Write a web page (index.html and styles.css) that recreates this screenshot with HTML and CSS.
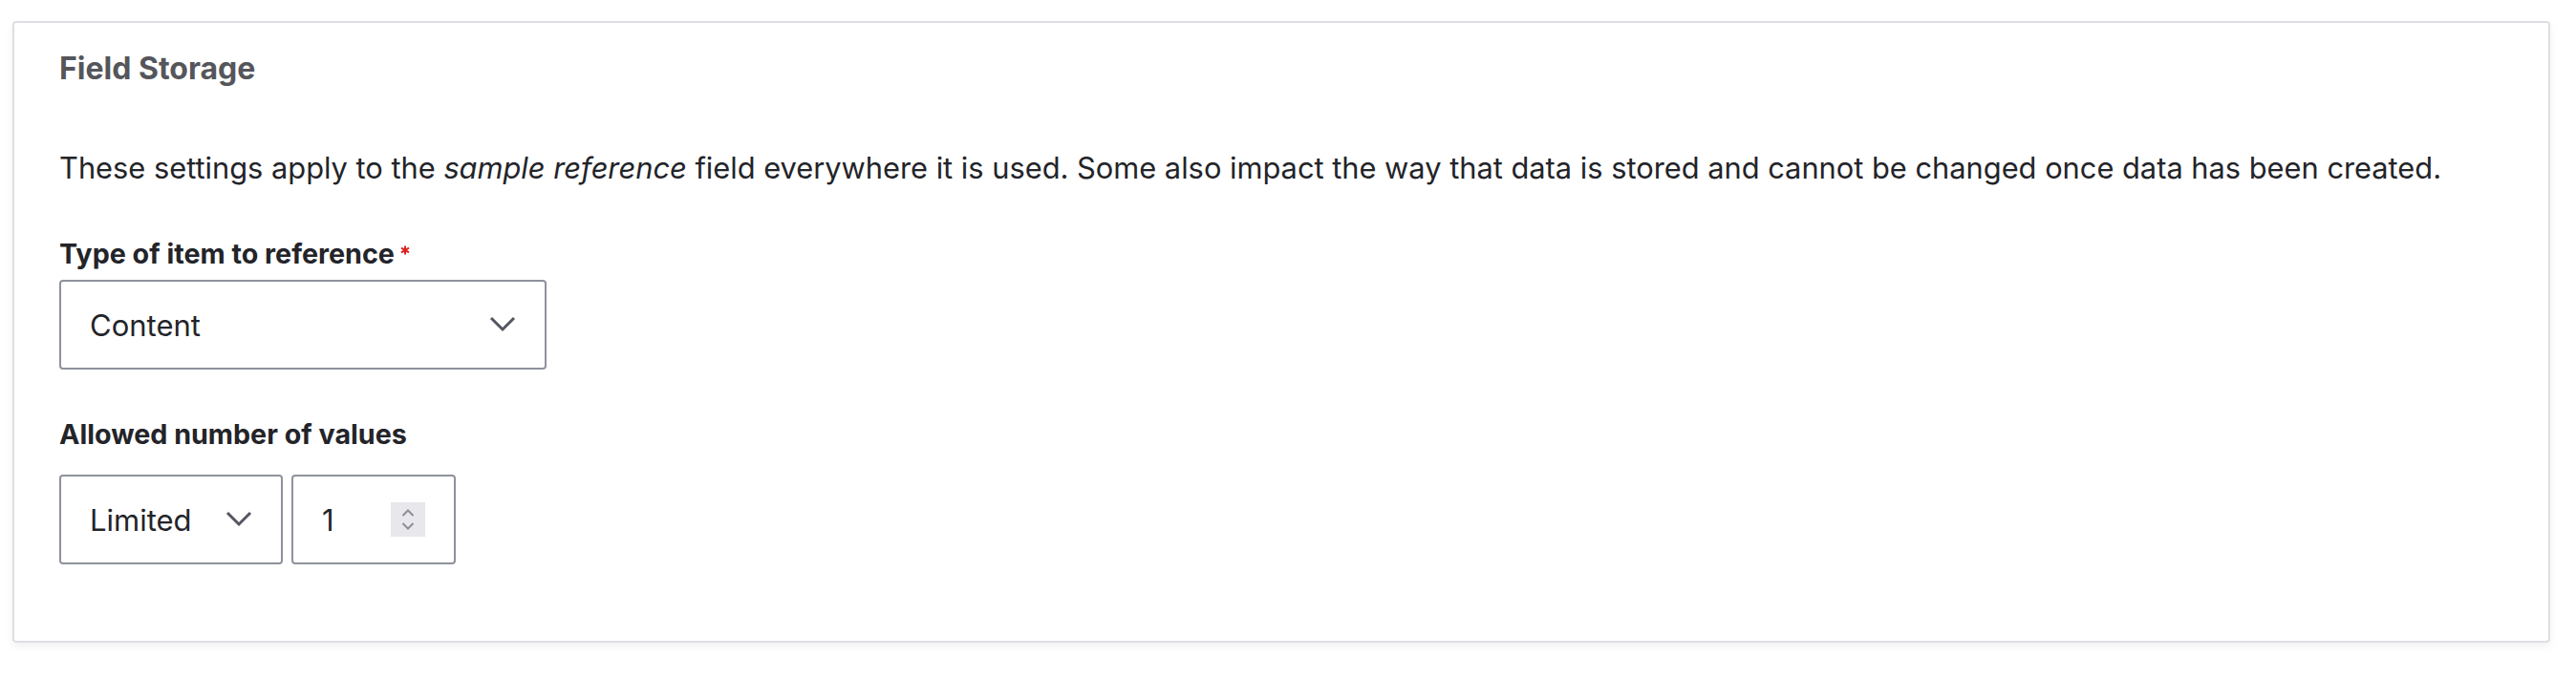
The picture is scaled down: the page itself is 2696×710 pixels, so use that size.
FILE: index.html
```html
<!DOCTYPE html>
<html lang="en">
<head>
<meta charset="utf-8">
<title>Field Storage</title>
<link rel="stylesheet" href="styles.css">
</head>
<body>
<main class="page">
  <fieldset class="card">
    <legend class="card__title">Field Storage</legend>
    <p class="card__desc">These settings apply to the <em>sample reference</em> field everywhere it is used. Some also impact the way that data is stored and cannot be changed once data has been created.</p>

    <div class="form-item form-item--first">
      <div class="form-label">Type of item to reference<svg class="req" width="10" height="10" viewBox="0 0 10 10" aria-hidden="true"><g stroke="#dc2323" stroke-width="2" stroke-linecap="butt"><line x1="5" y1="0.4" x2="5" y2="9.6"/><line x1="1" y1="2.7" x2="9" y2="7.3"/><line x1="1" y1="7.3" x2="9" y2="2.7"/></g></svg></div>
      <div class="select select--wide" role="combobox">
        <span class="select__value">Content</span>
        <svg class="chev" width="28" height="18" viewBox="0 0 14 9" aria-hidden="true"><path d="M1 1L7 7L13 1" fill="none" stroke="#545560" stroke-width="1.5"/></svg>
      </div>
    </div>

    <div class="form-item form-item--second">
      <div class="form-label form-label--gap">Allowed number of values</div>
      <div class="inline-row">
        <div class="select select--small" role="combobox">
          <span class="select__value">Limited</span>
          <svg class="chev" width="28" height="18" viewBox="0 0 14 9" aria-hidden="true"><path d="M1 1L7 7L13 1" fill="none" stroke="#545560" stroke-width="1.5"/></svg>
        </div>
        <div class="number" role="spinbutton">
          <span class="select__value">1</span>
          <span class="spin">
            <svg width="14" height="8" viewBox="0 0 14 8" aria-hidden="true"><path d="M1.5 7L7 1.5L12.5 7" fill="none" stroke="#8e8e98" stroke-width="2"/></svg>
            <svg width="14" height="8" viewBox="0 0 14 8" aria-hidden="true"><path d="M1.5 1L7 6.5L12.5 1" fill="none" stroke="#8e8e98" stroke-width="2"/></svg>
          </span>
        </div>
      </div>
    </div>
  </fieldset>
</main>
</body>
</html>
```

FILE: styles.css
```css
* { box-sizing: border-box; }

html, body {
  margin: 0;
  padding: 0;
  background: #ffffff;
}

body {
  font-family: Inter, "Liberation Sans", sans-serif;
  color: #232429;
}

.page {
  padding: 22px 27px 30px 13px;
}

.card {
  margin: 0;
  min-width: 0;
  border: 2px solid #dedfe4;
  border-radius: 4px;
  box-shadow: 0 4px 10px rgba(0, 0, 0, 0.06);
  padding: 24px 47px 80px 47px;
  background: #ffffff;
  display: block;
}

.card__title {
  float: left;
  width: 100%;
  padding: 0;
  margin: 0;
  font-size: 32px;
  line-height: 48px;
  font-weight: 700;
  color: #55565b;
}

.card__desc {
  clear: both;
  margin: 0;
  padding-top: 56px;
  font-size: 30.8px;
  line-height: 48px;
  color: #232429;
}

.form-item--first { margin-top: 48px; }
.form-item--second { margin-top: 50px; }

.form-label {
  font-size: 28.7px;
  line-height: 36px;
  font-weight: 700;
  color: #232429;
  margin-bottom: 9px;
}

.form-label--gap { margin-bottom: 24px; }

.req {
  display: inline-block;
  vertical-align: top;
  margin-top: 9px;
  margin-left: 6px;
}

.select,
.number {
  height: 94px;
  border: 2px solid #8e929c;
  border-radius: 4px;
  background: #ffffff;
  display: flex;
  align-items: center;
  justify-content: space-between;
  padding: 0 30px;
  font-size: 31px;
  color: #232429;
}

.select--wide { width: 510px; }
.select--small { width: 234px; }

.inline-row {
  display: flex;
  gap: 9px;
}

.number { width: 172px; }

.spin {
  width: 36px;
  height: 36px;
  background: #e7e7ec;
  display: flex;
  flex-direction: column;
  align-items: center;
  justify-content: center;
  gap: 6px;
}

.spin svg { display: block; }
.chev { display: block; }
```
